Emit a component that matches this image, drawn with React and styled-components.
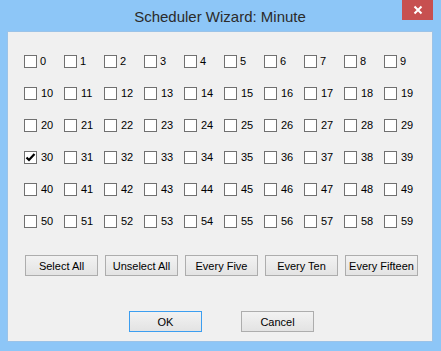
import React, { useState } from "react";
import styled, { createGlobalStyle } from "styled-components";

const GlobalStyle = createGlobalStyle`
  html, body {
    margin: 0;
    padding: 0;
    background: #8dc6f7;
  }
`;

const Window = styled.div`
  width: 441px;
  height: 351px;
  background: #8dc6f7;
  display: flex;
  flex-direction: column;
  font-family: "Liberation Sans", Arial, sans-serif;
  box-sizing: border-box;
  padding: 0 8px 9px 7px;
`;

const TitleBar = styled.div`
  height: 31px;
  display: flex;
  align-items: center;
  justify-content: center;
  position: relative;
  flex-shrink: 0;
`;

const Title = styled.div`
  font-size: 15px;
  color: #2b2b2b;
  margin-top: 1px;
`;

const CloseButton = styled.div`
  position: absolute;
  top: 0;
  right: 0;
  width: 31px;
  height: 20px;
  background: #c75050;
  display: flex;
  align-items: center;
  justify-content: center;
`;

const Panel = styled.div`
  flex: 1;
  background: #f0f0f0;
  border: 1px solid #9bc3e8;
  box-sizing: border-box;
  padding: 23px 0 0 16px;
  display: flex;
  flex-direction: column;
`;

const Grid = styled.div`
  display: grid;
  grid-template-columns: repeat(10, 40px);
  row-gap: 19px;
`;

const Cell = styled.label`
  display: flex;
  align-items: center;
  height: 13px;
  cursor: default;
`;

const Box = styled.span`
  width: 13px;
  height: 13px;
  box-sizing: border-box;
  border: 1px solid #707070;
  background: #ffffff;
  display: flex;
  align-items: center;
  justify-content: center;
  flex-shrink: 0;
`;

const Label = styled.span`
  font-size: 11px;
  color: #000;
  margin-left: ${(p) => (p.$wide ? 4 : 3)}px;
  line-height: 13px;
`;

const ButtonRow = styled.div`
  display: flex;
  gap: 7px;
  margin: 27px 0 0 1px;
`;

const Button = styled.div`
  width: 73px;
  height: 21px;
  box-sizing: border-box;
  border: 1px solid ${(p) => (p.$default ? "#3c9ef0" : "#adadad")};
  background: linear-gradient(#f2f2f2, #e3e3e3);
  display: flex;
  align-items: center;
  justify-content: center;
  font-size: 11px;
  color: #000;
  white-space: nowrap;
`;

const FooterRow = styled.div`
  display: flex;
  justify-content: center;
  gap: 39px;
  margin: 35px 0 0 -13px;
`;

const Check = () => (
  <svg width="11" height="11" viewBox="0 0 11 11">
    <path d="M1.5 5.5 L4 8 L9.5 2" fill="none" stroke="#000" strokeWidth="2.2" />
  </svg>
);

export default function App() {
  const [checked, setChecked] = useState([30]);
  const toggle = (n) =>
    setChecked((c) => (c.includes(n) ? c.filter((x) => x !== n) : [...c, n]));
  const minutes = Array.from({ length: 60 }, (_, i) => i);

  return (
    <>
      <GlobalStyle />
      <Window>
        <TitleBar>
          <Title>Scheduler Wizard: Minute</Title>
          <CloseButton>
            <svg width="10" height="10" viewBox="0 0 10 10">
              <path d="M1.5 1.5 L8.5 8.5 M8.5 1.5 L1.5 8.5" stroke="#fff" strokeWidth="2" />
            </svg>
          </CloseButton>
        </TitleBar>
        <Panel>
          <Grid>
            {minutes.map((n) => (
              <Cell key={n} onClick={() => toggle(n)}>
                <Box>{checked.includes(n) && <Check />}</Box>
                <Label $wide={n >= 10}>{n}</Label>
              </Cell>
            ))}
          </Grid>
          <ButtonRow>
            <Button>Select All</Button>
            <Button>Unselect All</Button>
            <Button>Every Five</Button>
            <Button>Every Ten</Button>
            <Button>Every Fifteen</Button>
          </ButtonRow>
          <FooterRow>
            <Button $default>OK</Button>
            <Button>Cancel</Button>
          </FooterRow>
        </Panel>
      </Window>
    </>
  );
}
